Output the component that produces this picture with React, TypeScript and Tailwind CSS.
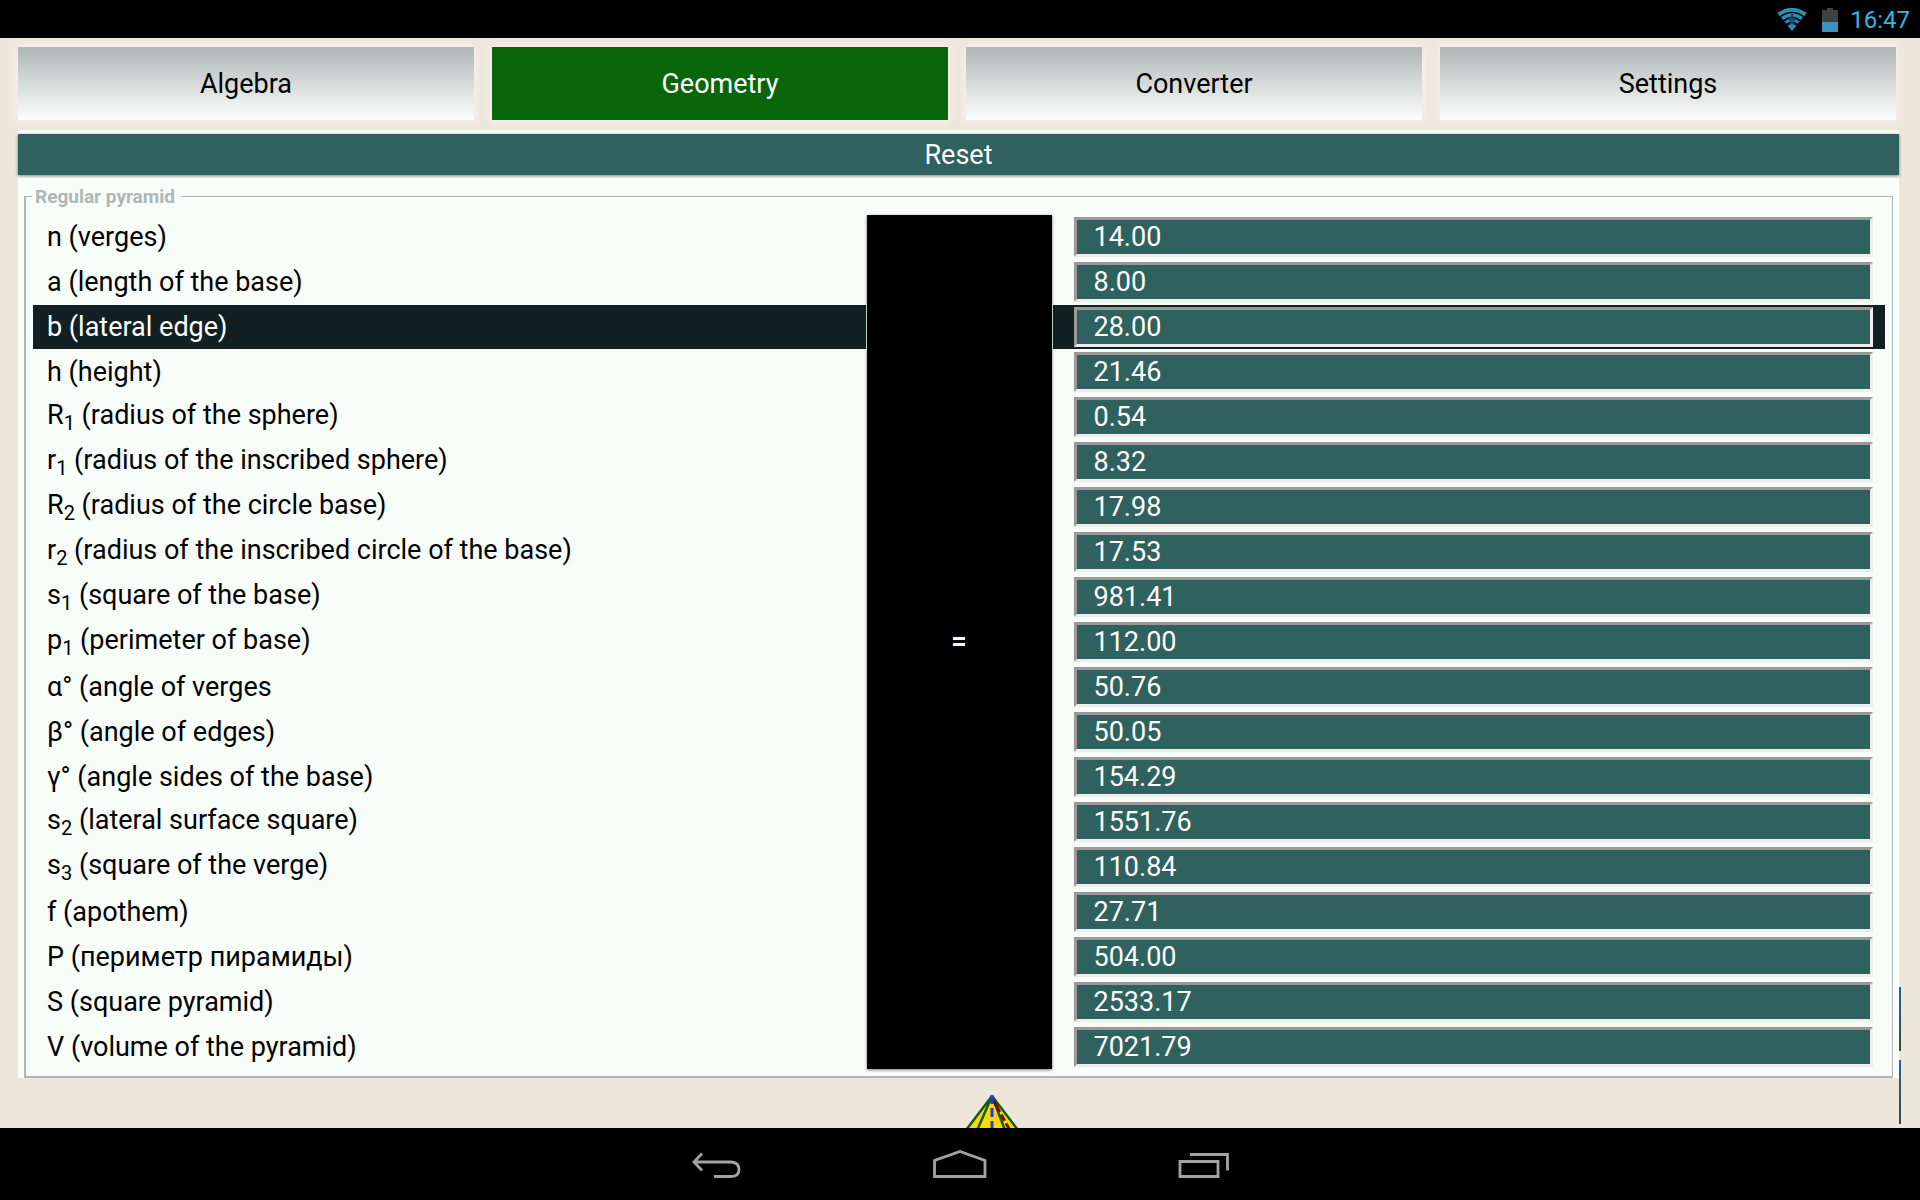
import type { ReactNode } from "react";

const rows: { label: ReactNode; name: string; value: string; active?: boolean }[] = [
  { name: "n", label: <>n (verges)</>, value: "14.00" },
  { name: "a", label: <>a (length of the base)</>, value: "8.00" },
  { name: "b", label: <>b (lateral edge)</>, value: "28.00", active: true },
  { name: "h", label: <>h (height)</>, value: "21.46" },
  { name: "R1", label: <>R<Sub>1</Sub> (radius of the sphere)</>, value: "0.54" },
  { name: "r1", label: <>r<Sub>1</Sub> (radius of the inscribed sphere)</>, value: "8.32" },
  { name: "R2", label: <>R<Sub>2</Sub> (radius of the circle base)</>, value: "17.98" },
  { name: "r2", label: <>r<Sub>2</Sub> (radius of the inscribed circle of the base)</>, value: "17.53" },
  { name: "s1", label: <>s<Sub>1</Sub> (square of the base)</>, value: "981.41" },
  { name: "p1", label: <>p<Sub>1</Sub> (perimeter of base)</>, value: "112.00" },
  { name: "alpha", label: <>α° (angle of verges</>, value: "50.76" },
  { name: "beta", label: <>β° (angle of edges)</>, value: "50.05" },
  { name: "gamma", label: <>γ° (angle sides of the base)</>, value: "154.29" },
  { name: "s2", label: <>s<Sub>2</Sub> (lateral surface square)</>, value: "1551.76" },
  { name: "s3", label: <>s<Sub>3</Sub> (square of the verge)</>, value: "110.84" },
  { name: "f", label: <>f (apothem)</>, value: "27.71" },
  { name: "P", label: <>P (периметр пирамиды)</>, value: "504.00" },
  { name: "S", label: <>S (square pyramid)</>, value: "2533.17" },
  { name: "V", label: <>V (volume of the pyramid)</>, value: "7021.79" },
];

const tabs = ["Algebra", "Geometry", "Converter", "Settings"];

function Sub({ children }: { children: ReactNode }) {
  return <sub className="bottom-0 align-sub text-xl leading-6">{children}</sub>;
}

function StatusBar() {
  return (
    <header className="flex h-[38px] shrink-0 items-center justify-end bg-black pt-0.5 pr-2.5 text-[#33b5e5]">
      <svg className="mr-[15px] h-6 w-[30px]" viewBox="0 0 30 24" aria-label="Wi-Fi" fill="none" stroke="#2c8db5">
        <path d="M1.500 6.500Q15-3 28.500 6.500" strokeWidth="4" />
        <path d="M5 10.500Q15 3.500 25 10.500" strokeWidth="3.500" />
        <path d="M8.500 14.500Q15 9.500 21.500 14.500" strokeWidth="3" />
        <path d="M10.500 17.500Q15 14.500 19.500 17.500L15 23Z" fill="#2c8db5" stroke="none" />
        <path d="M15 5l2 4h-4ZM12.500 9.500h5l1 3.500h-7ZM13.500 14h3l1 2h-5Z" fill="#145068" stroke="none" />
      </svg>
      <svg className="mr-3 h-6 w-4" viewBox="0 0 16 24" aria-label="Battery">
        <path d="M5 0h6v2h5v12H0V2h5Z" fill="#404040" />
        <path d="M0 14h16v10H0Z" fill="#3a93b8" />
      </svg>
      <time className="text-2xl">16:47</time>
    </header>
  );
}

function NavBar() {
  return (
    <nav className="flex h-[72px] shrink-0 items-center justify-center gap-[188px] bg-black pt-1" aria-label="System">
      <button aria-label="Back">
        <svg className="h-8 w-14" viewBox="0 0 56 32" fill="none" stroke="#a3a3a3" strokeWidth="2.800">
          <path d="M14 3.500L6 12L14 20.500M6 12H43Q51 12.500 51 19.500Q51 26.500 43 26.500H26" />
        </svg>
      </button>
      <button aria-label="Home">
        <svg className="h-8 w-14" viewBox="0 0 56 32" fill="none" stroke="#a3a3a3" strokeWidth="2.800">
          <path d="M2.500 26.500V10.500L28 1.500L53 10.500V26.500Z" />
        </svg>
      </button>
      <button aria-label="Recent apps">
        <svg className="h-8 w-14" viewBox="0 0 56 32" fill="none" stroke="#a3a3a3" strokeWidth="2.800">
          <path d="M4 11.500H42V26.500H4ZM14 4.500H51.500V20.500" />
        </svg>
      </button>
    </nav>
  );
}

function Pyramid() {
  return (
    <svg className="h-20 w-[120px] shrink-0" viewBox="0 0 120 80" aria-label="Pyramid drawing">
      <path d="M60 2L2 78H118Z" fill="#ffd800" />
      <path d="M60 2L2 78M60 2L27 78M60 2L89 78M60 2L118 78" fill="none" stroke="#0d5c1c" strokeWidth="2.500" />
      <path d="M60 4L101 78" fill="none" stroke="#7c0a0a" strokeWidth="3" strokeDasharray="16 3 7 3" />
      <path d="M60 1V80" stroke="#1f3fe0" strokeWidth="3" strokeDasharray="9 4" />
    </svg>
  );
}

export default function App() {
  return (
    <div className="flex h-screen flex-col overflow-hidden bg-[#ede6db] font-['Roboto',sans-serif] text-[27px] leading-8 text-black">
      <StatusBar />
      <main className="relative flex min-h-0 flex-1 flex-col overflow-hidden">
        <div className="grid shrink-0 grid-cols-4 gap-[18px] pt-[9px] pr-6 pl-[18px]" role="tablist">
          {tabs.map((tab) => (
            <button
              key={tab}
              role="tab"
              aria-selected={tab === "Geometry"}
              className={
                tab === "Geometry"
                  ? "h-[73px] bg-[#096509] text-white shadow-[0_0_8px_2px_#fbf0ee]"
                  : "h-[73px] bg-linear-to-b from-[#aeb8b7] to-[#fdfefd] shadow-[0_0_8px_2px_#fbf0ee]"
              }
            >
              {tab}
            </button>
          ))}
        </div>
        <form className="mt-2.5 mr-[21px] ml-[18px] shrink-0 bg-[#f8fdf9] pt-1" onSubmit={(e) => e.preventDefault()}>
          <button type="reset" className="block h-[41px] w-full bg-[#2f615f] text-white shadow-[0_1px_3px_#00000080]">
            Reset
          </button>
          <fieldset className="mx-1.5 mt-[9px] border-t border-r border-b-2 border-l-2 border-[#adb7b8] px-1.5 pb-1.5">
            <legend className="ml-0 pt-0.5 pr-1.5 pl-[3px] text-[19px] leading-[22px] font-bold text-[#adb7b5]">
              Regular pyramid
            </legend>
            <table className="mt-1.5 w-full table-fixed border-separate border-spacing-px">
              <colgroup>
                <col className="w-[45%]" />
                <col className="w-[10%]" />
                <col className="w-[45%]" />
              </colgroup>
              <tbody>
                {rows.map((row, i) => (
                  <tr key={row.name} className={row.active ? "text-white" : ""}>
                    <td className={row.active ? "h-11 bg-[#122024] py-0 pl-3.5" : "h-11 py-0 pl-3.5"}>
                      <label htmlFor={row.name}>{row.label}</label>
                    </td>
                    {i === 0 && (
                      <td
                        rowSpan={rows.length}
                        className="bg-black pb-0.5 text-center align-middle font-bold text-white shadow-[0_1px_3px_#00000080]"
                      >
                        =
                      </td>
                    )}
                    <td className={row.active ? "h-11 bg-[#122024] py-0 pr-3 pl-[21px]" : "h-11 py-0 pr-3 pl-[21px]"}>
                      <input
                        id={row.name}
                        defaultValue={row.value}
                        className="block h-10 w-full border-3 border-t-[#999999] border-r-[#eeeeee] border-b-[#eeeeee] border-l-[#999999] bg-[#2f615f] px-[17px] text-white outline-none"
                      />
                    </td>
                  </tr>
                ))}
              </tbody>
            </table>
          </fieldset>
        </form>
        <div className="mt-4 flex min-h-0 justify-center pl-16">
          <Pyramid />
        </div>
        <div className="absolute right-[19px] bottom-1 flex flex-col gap-[9px]" aria-hidden="true">
          <div className="h-16 w-0.5 bg-linear-to-b from-[#2a6488] to-[#344b49]" />
          <div className="h-16 w-0.5 bg-linear-to-b from-[#2a6488] to-[#344b49]" />
        </div>
      </main>
      <NavBar />
    </div>
  );
}
